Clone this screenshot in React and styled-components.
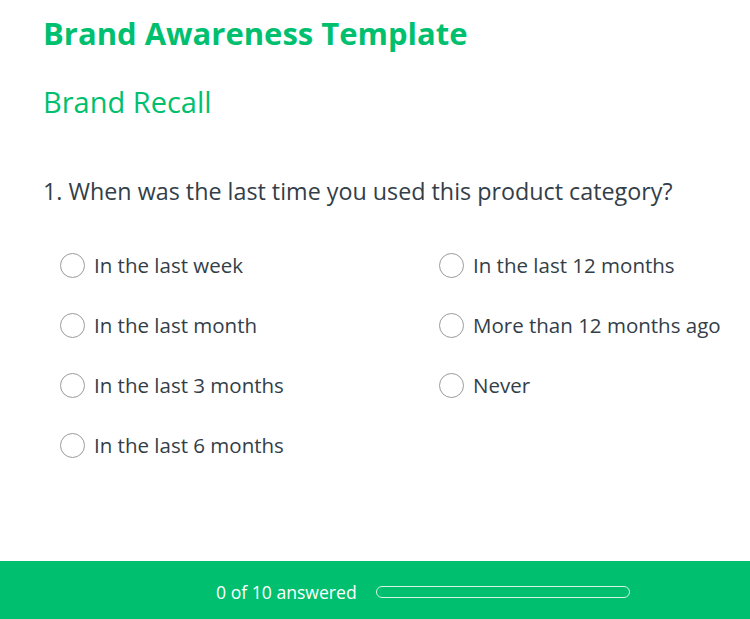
import React from "react";
import styled, { createGlobalStyle } from "styled-components";

const GlobalStyle = createGlobalStyle`
  html, body {
    margin: 0;
    padding: 0;
    background: #ffffff;
  }
  body {
    font-family: "Open Sans", "Liberation Sans", sans-serif;
    color: #333e48;
  }
`;

const Page = styled.div`
  width: 750px;
  height: 619px;
  display: flex;
  flex-direction: column;
  overflow: hidden;
`;

const Content = styled.main`
  flex: 1;
  padding: 14px 0 0 43px;
`;

const Title = styled.h1`
  margin: 0;
  font-size: 31px;
  font-weight: 700;
  line-height: 38px;
  color: #00bf6f;
`;

const PageTitle = styled.h2`
  margin: 32px 0 0;
  font-size: 29px;
  font-weight: 400;
  line-height: 36px;
  color: #00bf6f;
`;

const Question = styled.h3`
  margin: 56px 0 0;
  font-size: 23.3px;
  font-weight: 400;
  line-height: 30px;
  color: #333e48;
`;

const Options = styled.div`
  display: grid;
  grid-template-columns: 379px 1fr;
  grid-auto-flow: column;
  grid-template-rows: repeat(4, 60px);
  margin-top: 44px;
  padding-left: 17px;
`;

const Option = styled.label`
  display: flex;
  align-items: center;
  height: 30px;
  gap: 9px;
  font-size: 20.5px;
  color: #333e48;
  cursor: pointer;
`;

const Radio = styled.span`
  width: 23px;
  height: 23px;
  border: 1.5px solid #9b9b9b;
  border-radius: 50%;
  flex-shrink: 0;
  box-sizing: content-box;
`;

const Footer = styled.footer`
  height: 58px;
  box-sizing: border-box;
  padding: 4px 0 0 216px;
  background: #00bf6f;
  display: flex;
  align-items: center;
  gap: 19px;
`;

const Count = styled.span`
  font-size: 17.6px;
  color: #ffffff;
`;

const Track = styled.div`
  width: 252px;
  height: 10px;
  border: 1px solid #d6f5e6;
  border-radius: 6px;
  box-sizing: content-box;
`;

const left = [
  "In the last week",
  "In the last month",
  "In the last 3 months",
  "In the last 6 months",
];
const right = ["In the last 12 months", "More than 12 months ago", "Never"];

export default function App() {
  return (
    <Page>
      <GlobalStyle />
      <Content>
        <Title>Brand Awareness Template</Title>
        <PageTitle>Brand Recall</PageTitle>
        <Question>1. When was the last time you used this product category?</Question>
        <Options>
          {[...left, ...right].map((label) => (
            <Option key={label}>
              <Radio />
              {label}
            </Option>
          ))}
        </Options>
      </Content>
      <Footer>
        <Count>0 of 10 answered</Count>
        <Track />
      </Footer>
    </Page>
  );
}
